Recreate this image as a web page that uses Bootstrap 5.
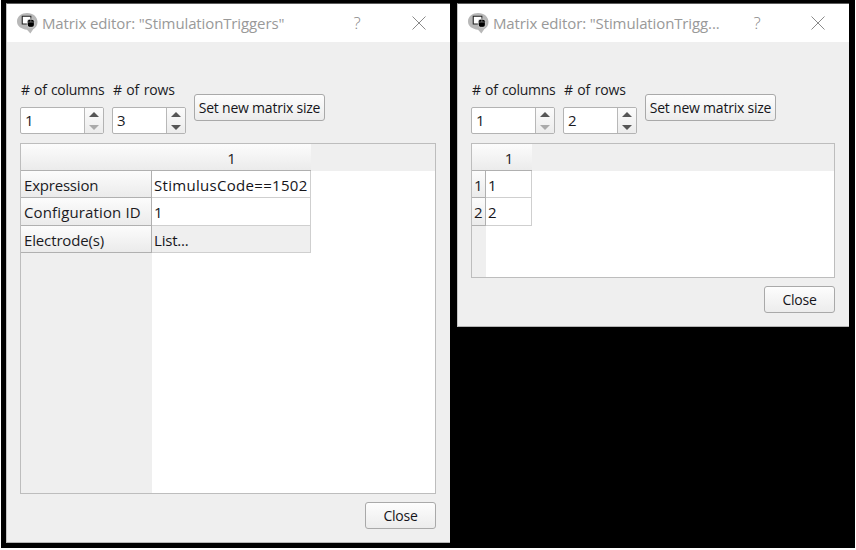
<!DOCTYPE html>
<html lang="en">
<head>
<meta charset="utf-8">
<title>Matrix editor</title>
<meta name="viewport" content="width=device-width, initial-scale=1">
<link href="https://cdn.jsdelivr.net/npm/bootstrap@5.3.0/dist/css/bootstrap.min.css" rel="stylesheet">
<style>
body{font-family:"Open Sans","Noto Sans",sans-serif;font-size:14px;line-height:20px;color:#1b1b1f;background:#fff;padding:0 1px 2px;height:550px}
.desk{background:#000;height:548px;padding:3px 6px 0 5px;gap:7px}
.win{background:#efefef;border-top:1px solid #5c5c5c;border-bottom:1px solid #b4b4b4;border-left:1px solid #c4c4c4}
.win-a{width:444px;height:540px}
.win-b{width:392px;height:324px}
.titlebar{height:38px;background:#fff;color:#999;padding-left:10px;flex:none}
.titlebar svg{display:block;flex:none}
.caption{font-size:15px;letter-spacing:-.12px;margin-left:4px;padding-bottom:1px}
.help{font-size:17px;font-weight:300;width:12px;text-align:center;color:#888;padding-bottom:1px}
.win-a .help{margin-right:48px}
.win-b .help{margin-right:47px}
.cross{margin-right:23px}
.content{padding:38px 14px 13px 13px}
.fields{gap:8px;height:63px}
.lbl{letter-spacing:-.16px;word-spacing:1px;height:20px;margin-bottom:7px;padding-left:1px;white-space:nowrap}
.cols .lbl{letter-spacing:-.3px}
.cols{width:84px}
.rowsf{width:74px}
.spin{height:27px;border:1px solid #b3b3b3;border-radius:2px;background:#fff;overflow:hidden}
.spin .val{font-size:15px;padding-left:4px;line-height:25px}
.step{width:19px;border-left:1px solid #b8b8b8;background:linear-gradient(#fbfbfb,#ececec)}
.tool{height:27px;padding:0;border:1px solid #a9a9a9;border-radius:3px;background:linear-gradient(#fdfdfd,#ececec);font-size:14px;line-height:24px;color:#15151a;letter-spacing:-.22px}
.setsize{width:131px;margin-top:14px;padding-top:1px}
.closebtn{width:71px;margin-top:8px;flex:none;padding-top:1px}
.sheet{background:#fff;border:1px solid #bdbdbd;font-size:15px}
.win-a .sheet{grid-template-columns:131px 159px 1fr;grid-template-rows:27px 27px 28px 27px 1fr}
.win-b .sheet{grid-template-columns:14px 46px 1fr;grid-template-rows:27px 27px 28px 1fr}
.sheet>div{line-height:29px;white-space:nowrap;min-width:0;min-height:0}
.hd{background:linear-gradient(#fcfcfc,#ebebeb);border-bottom:1px solid #b0b0b0}
.rh{border-right:1px solid #b0b0b0;padding-left:3px}
.win-b .rh{padding-left:2px}
.cel{border-right:1px solid #cfcfcf;border-bottom:1px solid #cfcfcf;padding-left:2px;color:#15151a}
.gray{background:#efefef}
.s1{letter-spacing:.3px}.s2{letter-spacing:.13px}.s3{letter-spacing:-.2px}.s4{letter-spacing:-.14px}
</style>
</head>
<body>
<svg class="d-none">
  <symbol id="logo" viewBox="0 0 22 22">
    <path d="M10.500 0C17 0 21.500 4 21.500 9.500C21.500 13.500 19.500 15.800 17 17L14 21.500L10.500 17.500C4.500 16.500 0 14 0 8.800C0 3.500 5 0 10.500 0Z" fill="#b8b8b8"/>
    <path d="M5.500 3.500H14.500V11.500H5.500Z" fill="#fff" stroke="#222" stroke-width="1.100"/>
    <rect x="10.800" y="6.500" width="7.400" height="8.500" rx="2.500" fill="#000" stroke="#eee" stroke-width=".8"/>
    <path d="M14.500 4.500V9.500M11.500 9.500H17.500" stroke="#aaa" stroke-width=".6"/>
  </symbol>
  <symbol id="x" viewBox="0 0 16 16"><path d="M1.500 1.500L14.500 14.500M14.500 1.500L1.500 14.500" stroke="#8a8a8a" stroke-width="1" fill="none"/></symbol>
  <symbol id="up" viewBox="0 0 10 5"><path d="M0 5L5 0L10 5Z" fill="currentColor"/></symbol>
  <symbol id="down" viewBox="0 0 10 5"><path d="M0 0L5 5L10 0Z" fill="currentColor"/></symbol>
</svg>
<main class="desk d-flex align-items-start">
  <section class="win win-a d-flex flex-column">
    <header class="titlebar d-flex align-items-center">
      <svg width="21" height="21"><use href="#logo"/></svg>
      <span class="caption me-auto">Matrix editor: "StimulationTriggers"</span>
      <span class="help">?</span>
      <svg class="cross" width="16" height="16"><use href="#x"/></svg>
    </header>
    <div class="content d-flex flex-column flex-grow-1">
      <div class="fields d-flex flex-shrink-0">
        <div class="cols"><div class="lbl"># of columns</div>
          <div class="spin d-flex"><span class="val flex-grow-1">1</span><span class="step d-flex flex-column align-items-center justify-content-center"><svg class="mb-2" width="10" height="5" color="#555"><use href="#up"/></svg><svg width="10" height="5" color="#aaa"><use href="#down"/></svg></span></div></div>
        <div class="rowsf"><div class="lbl"># of rows</div>
          <div class="spin d-flex"><span class="val flex-grow-1">3</span><span class="step d-flex flex-column align-items-center justify-content-center"><svg class="mb-2" width="10" height="5" color="#555"><use href="#up"/></svg><svg width="10" height="5" color="#555"><use href="#down"/></svg></span></div></div>
        <button class="tool setsize">Set new matrix size</button>
      </div>
      <div class="sheet d-grid flex-grow-1">
        <div class="hd"></div><div class="hd text-center">1</div><div class="gray"></div>
        <div class="hd rh s3">Expression</div><div class="cel s1">StimulusCode==1502</div><div></div>
        <div class="hd rh s2">Configuration ID</div><div class="cel">1</div><div></div>
        <div class="hd rh s4">Electrode(s)</div><div class="cel gray s3">List...</div><div></div>
        <div class="gray"></div><div></div><div></div>
      </div>
      <button class="tool closebtn align-self-end">Close</button>
    </div>
  </section>
  <section class="win win-b d-flex flex-column">
    <header class="titlebar d-flex align-items-center">
      <svg width="21" height="21"><use href="#logo"/></svg>
      <span class="caption me-auto">Matrix editor: "StimulationTrigg...</span>
      <span class="help">?</span>
      <svg class="cross" width="16" height="16"><use href="#x"/></svg>
    </header>
    <div class="content d-flex flex-column flex-grow-1">
      <div class="fields d-flex flex-shrink-0">
        <div class="cols"><div class="lbl"># of columns</div>
          <div class="spin d-flex"><span class="val flex-grow-1">1</span><span class="step d-flex flex-column align-items-center justify-content-center"><svg class="mb-2" width="10" height="5" color="#555"><use href="#up"/></svg><svg width="10" height="5" color="#aaa"><use href="#down"/></svg></span></div></div>
        <div class="rowsf"><div class="lbl"># of rows</div>
          <div class="spin d-flex"><span class="val flex-grow-1">2</span><span class="step d-flex flex-column align-items-center justify-content-center"><svg class="mb-2" width="10" height="5" color="#555"><use href="#up"/></svg><svg width="10" height="5" color="#555"><use href="#down"/></svg></span></div></div>
        <button class="tool setsize">Set new matrix size</button>
      </div>
      <div class="sheet d-grid flex-grow-1">
        <div class="hd"></div><div class="hd text-center">1</div><div class="gray"></div>
        <div class="hd rh">1</div><div class="cel">1</div><div></div>
        <div class="hd rh">2</div><div class="cel">2</div><div></div>
        <div class="gray"></div><div></div><div></div>
      </div>
      <button class="tool closebtn align-self-end">Close</button>
    </div>
  </section>
</main>
<script src="https://cdn.jsdelivr.net/npm/bootstrap@5.3.0/dist/js/bootstrap.bundle.min.js"></script>
</body>
</html>
